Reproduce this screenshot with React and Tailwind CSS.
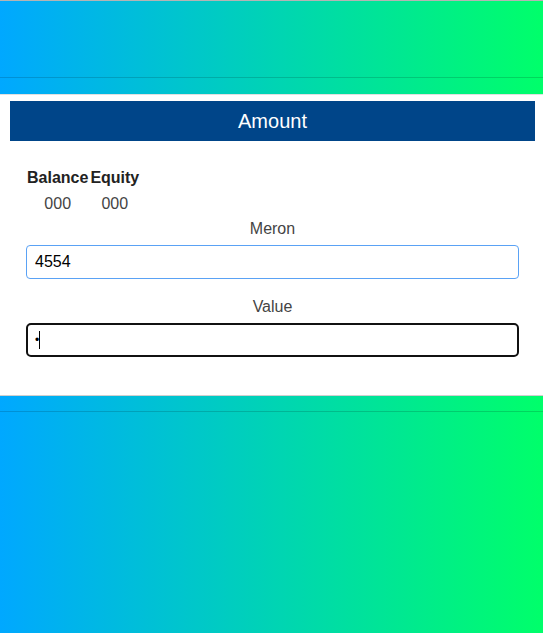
export default function App() {
  return (
    <div className="min-h-[633px] bg-[linear-gradient(to_right,#00a8ff,#00ff6a)] font-['Liberation_Sans',Arial,sans-serif] text-[#333]">
      <div className="h-[78px] border-t border-t-[#b4b4b4] border-b border-b-black/15" />
      <div className="h-[16px]" />
      <div className="bg-white border-t border-t-[#e0e0e0] pt-[6px] px-[10px] pb-[38px] pr-[8px]">
        <div className="h-[40px] bg-[#004589] flex items-center justify-center text-white text-[20px]">
          Amount
        </div>
        <div className="px-[16px] pt-[26px]">
          <table className="border-separate border-spacing-x-[2px] border-spacing-y-[1px] -ml-[1px]">
            <thead>
              <tr>
                <th className="text-[16px] font-bold text-[#222] leading-[20px] px-0">Balance</th>
                <th className="text-[16px] font-bold text-[#222] leading-[20px] px-0">Equity</th>
              </tr>
            </thead>
            <tbody>
              <tr>
                <td className="text-[16px] text-center leading-[30px] text-[#444]">000</td>
                <td className="text-[16px] text-center leading-[30px] text-[#444]">000</td>
              </tr>
            </tbody>
          </table>
          <div className="text-center text-[16px] leading-[20px] -mt-[1px] text-[#444]">Meron</div>
          <div className="mt-[6px] h-[34px] border border-[#5aa2f5] rounded-[4px] flex items-center px-[8px] text-[16px] text-black">
            4554
          </div>
          <div className="text-center text-[16px] leading-[20px] mt-[18px] text-[#444]">Value</div>
          <div className="mt-[6px] h-[34px] border-2 border-[#111] rounded-[5px] flex items-center px-[7px] text-[16px] text-black">
            <span className="text-[12px] leading-none">•</span>
            <span className="inline-block w-px h-[18px] bg-black" />
          </div>
        </div>
      </div>
      <div className="border-t border-t-[#cfcfcf] h-[17px] border-b border-b-black/15" />
    </div>
  );
}
